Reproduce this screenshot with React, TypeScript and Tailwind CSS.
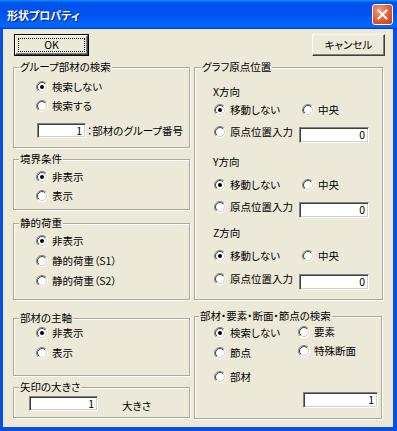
import React from "react";

function Radio({ checked }: { checked?: boolean }) {
  return (
    <svg width="12" height="12" viewBox="0 0 12 12" className="shrink-0 block">
      <defs>
        <linearGradient id="ro" x1="0" y1="0" x2="1" y2="1">
          <stop offset="0.5" stopColor="#808080" />
          <stop offset="0.5" stopColor="#ffffff" />
        </linearGradient>
        <linearGradient id="ri" x1="0" y1="0" x2="1" y2="1">
          <stop offset="0.5" stopColor="#404040" />
          <stop offset="0.5" stopColor="#d4d0c8" />
        </linearGradient>
      </defs>
      <circle cx="6" cy="6" r="5.5" fill="none" stroke="url(#ro)" strokeWidth="1" />
      <circle cx="6" cy="6" r="4.5" fill="#ffffff" stroke="url(#ri)" strokeWidth="1" />
      {checked && <circle cx="6" cy="6" r="2" fill="#000000" />}
    </svg>
  );
}

function RadioRow({ label, checked, className = "" }: { label: string; checked?: boolean; className?: string }) {
  return (
    <div className={`flex h-[14px] items-center gap-[4px] whitespace-nowrap ${className}`}>
      <Radio checked={checked} />
      <span>{label}</span>
    </div>
  );
}

function Edit({ value, className = "" }: { value: string; className?: string }) {
  return (
    <div
      className={`box-border flex items-center justify-end bg-white pr-[3px] border border-t-[#808080] border-l-[#808080] border-b-white border-r-white shadow-[inset_1px_1px_0_#404040,inset_-1px_-1px_0_#d4d0c8] ${className}`}
    >
      {value}
    </div>
  );
}

function Group({
  label,
  className = "",
  legendLeft = "left-[5px]",
  children,
}: {
  label: string;
  className?: string;
  legendLeft?: string;
  children?: React.ReactNode;
}) {
  return (
    <div
      className={`relative box-border border border-[#aca899] shadow-[inset_1px_1px_0_#ffffff,1px_1px_0_#ffffff] ${className}`}
    >
      <span className={`absolute top-[-8px] ${legendLeft} px-[1px] bg-[#ece9d8] whitespace-nowrap leading-[14px]`}>
        {label}
      </span>
      {children}
    </div>
  );
}

export default function App() {
  return (
    <div className="w-[397px] h-[431px] flex flex-col bg-[#0a4fe4] text-[10.5px] leading-[14px] text-black font-['Noto_Sans_CJK_JP',sans-serif] [font-feature-settings:'palt']">
      {/* title bar */}
      <div className="h-[29px] shrink-0 flex items-center justify-between pl-[7px] pr-[4px] bg-[linear-gradient(180deg,#0997ff,#0053ee_8%,#0050ee_40%,#0066ff_88%,#0066ff_93%,#005bff_95%,#003dd7_96%,#003dd7)]">
        <span className="text-white font-bold text-[11px] [text-shadow:1px_1px_0_#0a1e80]">形状プロパティ</span>
        <div className="w-[21px] h-[21px] rounded-[3px] border border-white box-border flex items-center justify-center bg-[radial-gradient(circle_at_35%_30%,#f0a080,#e05a30_55%,#c83c10)]">
          <svg width="11" height="11" viewBox="0 0 11 11">
            <path d="M1.5 1.5 L9.5 9.5 M9.5 1.5 L1.5 9.5" stroke="#ffffff" strokeWidth="2" strokeLinecap="square" />
          </svg>
        </div>
      </div>
      {/* body */}
      <div className="flex-1 flex pl-[3px] pr-[4px] pb-[4px]">
        <div className="flex-1 bg-[#ece9d8] px-[10px] pt-[5px] flex flex-col">
          {/* buttons */}
          <div className="flex h-[22px] justify-between">
            <div className="ml-[1px] w-[75px] h-[22px] box-border border border-black">
              <div className="w-full h-full box-border border border-t-white border-l-white border-b-[#404040] border-r-[#404040] shadow-[inset_-1px_-1px_0_#808080] flex items-center justify-center p-[2px]">
                <div className="w-full h-full box-border border border-dotted border-black flex items-center justify-center">
                  OK
                </div>
              </div>
            </div>
            <div className="-mr-[2px] w-[73px] h-[22px] box-border border border-t-white border-l-white border-b-[#404040] border-r-[#404040] shadow-[inset_-1px_-1px_0_#808080] flex items-center justify-center">
              キャンセル
            </div>
          </div>
          {/* columns */}
          <div className="mt-[11px] flex gap-[4px]">
            {/* left column */}
            <div className="w-[177px] flex flex-col">
              <Group label="グループ部材の検索" className="h-[81px] pt-[12px] pl-[22px]">
                <RadioRow label="検索しない" checked />
                <RadioRow label="検索する" className="mt-[5px]" />
                <div className="mt-[10px] flex items-center">
                  <Edit value="1" className="ml-[1px] w-[49px] h-[15px]" />
                  <span className="ml-[1px] whitespace-nowrap">：部材のグループ番号</span>
                </div>
              </Group>
              <Group label="境界条件" className="mt-[11px] h-[51px] pt-[10px] pl-[22px]">
                <RadioRow label="非表示" checked />
                <RadioRow label="表示" className="mt-[5px]" />
              </Group>
              <Group label="静的荷重" className="mt-[13px] h-[77px] pt-[10px] pl-[22px]">
                <RadioRow label="非表示" checked />
                <RadioRow label="静的荷重（S1）" className="mt-[6px]" />
                <RadioRow label="静的荷重（S2）" className="mt-[6px]" />
              </Group>
              <Group label="部材の主軸" className="mt-[18px] h-[58px] pt-[7px] pl-[22px]">
                <RadioRow label="非表示" checked />
                <RadioRow label="表示" className="mt-[6px]" />
              </Group>
              <Group label="矢印の大きさ" className="mt-[11px] h-[31px] pt-[8px] pl-[15px]">
                <div className="flex items-start">
                  <Edit value="1" className="w-[69px] h-[15px]" />
                  <span className="ml-[24px] mt-[3px]">大きさ</span>
                </div>
              </Group>
            </div>
            {/* right column */}
            <div className="w-[189px] flex flex-col">
              <Group label="グラフ原点位置" legendLeft="left-[6px]" className="h-[233px] pt-[17px] pl-[18px]">
                <div>X方向</div>
                <div className="mt-[4px] ml-[1px] flex h-[14px]">
                  <RadioRow label="移動しない" checked className="w-[88px]" />
                  <RadioRow label="中央" />
                </div>
                <div className="mt-[8px] ml-[1px] flex items-start h-[18px]">
                  <RadioRow label="原点位置入力" className="w-[85px]" />
                  <Edit value="0" className="mt-[2px] w-[70px] h-[16px]" />
                </div>
                <div className="mt-[12px]">Y方向</div>
                <div className="mt-[9px] ml-[1px] flex h-[14px]">
                  <RadioRow label="移動しない" checked className="w-[88px]" />
                  <RadioRow label="中央" />
                </div>
                <div className="mt-[8px] ml-[1px] flex items-start h-[18px]">
                  <RadioRow label="原点位置入力" className="w-[85px]" />
                  <Edit value="0" className="mt-[2px] w-[70px] h-[16px]" />
                </div>
                <div className="mt-[8px]">Z方向</div>
                <div className="mt-[9px] ml-[1px] flex h-[14px]">
                  <RadioRow label="移動しない" checked className="w-[88px]" />
                  <RadioRow label="中央" />
                </div>
                <div className="mt-[9px] ml-[1px] flex items-start h-[18px]">
                  <RadioRow label="原点位置入力" className="w-[85px]" />
                  <Edit value="0" className="mt-[2px] w-[70px] h-[16px]" />
                </div>
              </Group>
              <Group
                label="部材・要素・断面・節点の検索"
                legendLeft="left-[4px]"
                className="mt-[16px] w-[188px] h-[103px] flex flex-col"
              >
                <div className="flex pl-[19px]">
                  <div className="w-[84px] flex flex-col pt-[9px]">
                    <RadioRow label="検索しない" checked />
                    <RadioRow label="節点" className="mt-[6px]" />
                    <RadioRow label="部材" className="mt-[10px]" />
                  </div>
                  <div className="flex flex-col pt-[8px]">
                    <RadioRow label="要素" />
                    <RadioRow label="特殊断面" className="mt-[5px]" />
                  </div>
                </div>
                <Edit value="1" className="mt-[8px] self-end mr-[3px] w-[75px] h-[16px]" />
              </Group>
            </div>
          </div>
        </div>
      </div>
    </div>
  );
}
